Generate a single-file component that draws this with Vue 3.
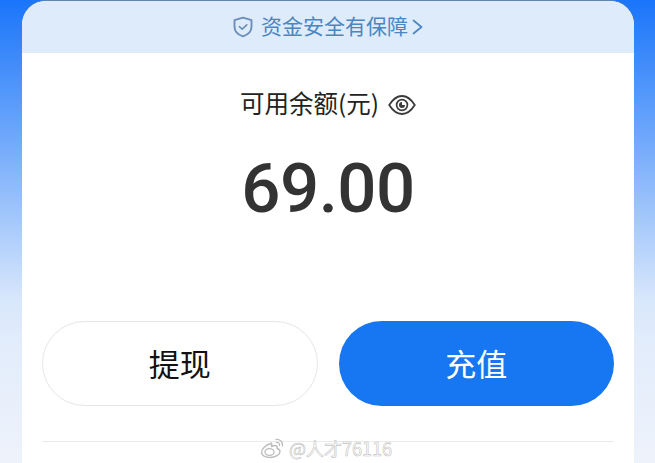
<template>
  <div class="page">
    <section class="card">
      <a class="safe">
        <svg class="shield" width="20" height="22" viewBox="0 0 20 22" fill="none">
          <path d="M10 1.600 18.500 4.200v6.600c0 4.600-3.400 7.900-8.500 9.600-5.100-1.700-8.500-5-8.500-9.600V4.200z" stroke="#6b8fb8" stroke-width="1.900" stroke-linejoin="round" />
          <path d="M6.400 10.600 9.200 13.200 13.800 8.900" stroke="#6b8fb8" stroke-width="1.600" stroke-linecap="round" stroke-linejoin="round" />
        </svg>
        <span class="safe-text">资金安全有保障</span>
        <svg class="chevron" width="11" height="16" viewBox="0 0 11 16" fill="none">
          <path d="M1.500 1.500 9.500 8l-8 6.500" stroke="#4b88c4" stroke-width="1.700" stroke-linecap="round" stroke-linejoin="round" />
        </svg>
      </a>

      <div class="body">
        <div class="label">
          <span>可用余额(元)</span>
          <svg class="eye" width="28" height="22" viewBox="0 0 28 22" fill="none">
            <path d="M1.200 11C5 5 9 2 14 2s9 3 12.800 9C23 17 19 20 14 20S5 17 1.200 11z" stroke="#3a3a3a" stroke-width="1.800" stroke-linejoin="round" />
            <circle cx="14" cy="11" r="5.400" stroke="#3a3a3a" stroke-width="1.700" />
            <path d="M14 8a3 3 0 1 0 3 3h-3z" fill="#3a3a3a" />
          </svg>
        </div>
        <div class="amount">{{ balance }}</div>

        <div class="actions">
          <button class="btn ghost">提现</button>
          <button class="btn primary">充值</button>
        </div>

        <div class="divider"></div>
      </div>
    </section>

    <div class="watermark">
      <svg width="26" height="22" viewBox="0 0 26 22" fill="none">
        <path d="M11 6.500C6 7.500 1.500 12 1.500 15.500c0 3 4 5 8.500 5 5.500 0 10-2.800 10-6 0-2-2-2.700-3-3 .6-1.800 0-3-2-3-1.200 0-2.500.5-3.500 1 .4-2 .1-3.300-.5-3.500z" stroke="#bdbdbd" stroke-width="1.400" stroke-linejoin="round" />
        <ellipse cx="9.500" cy="15" rx="4.500" ry="3.400" stroke="#bdbdbd" stroke-width="1.300" />
        <path d="M16 2.500c3.500-.6 7 2 6.500 6.500M16.500 5.500c1.800-.3 3.300 1 3 3" stroke="#bdbdbd" stroke-width="1.300" stroke-linecap="round" />
      </svg>
      <span>@人才76116</span>
    </div>
  </div>
</template>

<script setup>
const balance = '69.00'
</script>

<style>
html,
body {
  margin: 0;
  background: #eef3fb;
}
</style>

<style scoped>
.page {
  position: relative;
  width: 655px;
  height: 463px;
  overflow: hidden;
  padding: 1px 21px 0 22px;
  box-sizing: border-box;
  background: linear-gradient(180deg, #1a75fa 0, #6aa5fb 130px, #d8e7fb 300px, #e2ecfb 345px, #eef3fb 463px);
  font-family: "Noto Sans CJK SC", "Liberation Sans", sans-serif;
}

.card {
  height: 470px;
  background: #fff;
  border-radius: 24px 24px 0 0;
  overflow: hidden;
  box-shadow: 0 -1px 0 #5f86ad;
}

.safe {
  height: 52px;
  display: flex;
  align-items: center;
  justify-content: center;
  gap: 8px;
  background: #deebfb;
  color: #4a86c2;
  font-size: 21px;
  line-height: 1;
}

.safe-text {
  padding-bottom: 3px;
}

.chevron {
  margin-left: -4px;
}

.body {
  padding: 0 20px;
  display: flex;
  flex-direction: column;
}

.label {
  margin-top: 34px;
  height: 32px;
  display: flex;
  align-items: center;
  justify-content: center;
  gap: 9px;
  color: #222;
  font-size: 24.500px;
  line-height: 1;
}

.eye {
  margin-top: 3px;
}

.amount {
  margin-top: 30px;
  height: 80px;
  line-height: 80px;
  text-align: center;
  font-family: Roboto, "Liberation Sans", sans-serif;
  font-size: 69px;
  font-weight: 500;
  letter-spacing: -0.500px;
  color: #333;
}

.actions {
  margin-top: 92px;
  display: grid;
  grid-template-columns: 1fr 1fr;
  gap: 21px;
}

.btn {
  height: 85px;
  border-radius: 43px;
  font-family: inherit;
  font-size: 31px;
  padding: 0 0 3px;
  box-sizing: border-box;
}

.ghost {
  background: #fff;
  border: 1.500px solid #e6e6e6;
  color: #111;
}

.primary {
  background: #1777f2;
  border: 0;
  color: #fff;
}

.divider {
  margin-top: 35px;
  height: 1px;
  background: #ebebeb;
}

.watermark {
  position: absolute;
  left: 260px;
  top: 437px;
  display: flex;
  align-items: center;
  gap: 3px;
  color: #fff;
  -webkit-text-stroke: 0.600px #c4c4c4;
  font-size: 18px;
  line-height: 22px;
}
</style>
